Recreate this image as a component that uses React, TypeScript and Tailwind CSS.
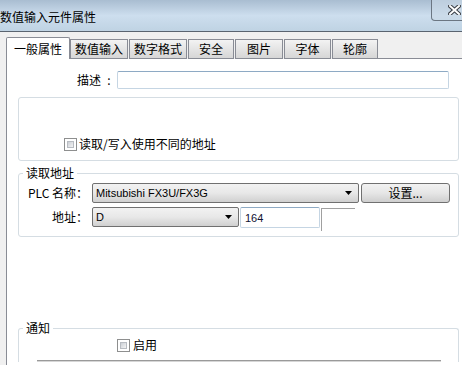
import React from 'react'

const font = { fontFamily: '"Noto Sans CJK SC", "Noto Sans", sans-serif' }

const tabs = ['数值输入', '数字格式', '安全', '图片', '字体', '轮廓']
const tabWidths = ['w-[58px]', 'w-[58px]', 'w-[46px]', 'w-[48px]', 'w-[47px]', 'w-[46px]']

function Checkbox() {
  return (
    <div className="w-[13px] h-[13px] border border-[#8e8f8f] bg-white p-[2px] shrink-0">
      <div className="w-full h-full bg-gradient-to-br from-[#cbcfd5] to-[#f4f4f4] border border-[#b8bcc2]" />
    </div>
  )
}

function Arrow() {
  return (
    <svg width="7" height="4" viewBox="0 0 7 4" className="shrink-0">
      <polygon points="0,0 7,0 3.5,4" fill="#000" />
    </svg>
  )
}

function Combo({ value, width }: { value: string; width: string }) {
  return (
    <div
      className={`${width} h-[20px] border border-[#707070] rounded-[2px] flex items-center pl-[3px] pr-[6px] bg-gradient-to-b from-[#f2f2f2] via-[#e8e8e8] to-[#d0d0d0]`}
    >
      <span className="flex-1 text-[11px] leading-none text-black" style={{ fontFamily: '"Liberation Sans", Arial, sans-serif' }}>
        {value}
      </span>
      <Arrow />
    </div>
  )
}

export default function App() {
  return (
    <div className="w-[462px] h-[365px] overflow-hidden bg-[#f0f0f0] flex flex-col text-[12px] leading-[14px] text-black" style={font}>
      {/* title bar */}
      <div className="h-[32px] shrink-0 border-b border-[#5a6470] bg-gradient-to-b from-[#a9bdd1] via-[#cddeee] to-[#bfd3e3] flex items-start justify-between">
        <div className="pt-[10px] text-[12px] leading-[14px] text-black">数值输入元件属性</div>
        <div className="w-[44px] h-[21px] mr-[-13px] border border-t-0 border-[#6b7682] rounded-b-[4px] bg-[#c9d8e6]/60 flex items-center pl-[16px]">
          <svg width="13" height="10" viewBox="0 0 13 10">
            <path d="M2 1 L11 9 M11 1 L2 9" stroke="#3a3f46" strokeWidth="4" strokeLinecap="square" />
            <path d="M2 1 L11 9 M11 1 L2 9" stroke="#ffffff" strokeWidth="2" strokeLinecap="square" />
          </svg>
        </div>
      </div>

      {/* tabs */}
      <div className="mt-[5px] h-[22px] shrink-0 flex items-end pl-[6px]">
        <div className="w-[64px] h-[22px] border border-b-0 border-[#898c95] rounded-t-[2px] bg-white flex items-center justify-center">
          一般属性
        </div>
        {tabs.map((t, i) => (
          <div
            key={t}
            className={`${tabWidths[i]} ${i === 0 ? '' : 'ml-[1px]'} h-[20px] border border-[#898c95] bg-gradient-to-b from-[#f3f3f3] to-[#d6d6d6] flex items-center justify-center`}
          >
            {t}
          </div>
        ))}
        <div className="flex-1 h-px bg-[#898c95]" />
      </div>

      {/* panel */}
      <div className="flex-1 ml-[6px] w-[470px] border-l border-[#898c95] bg-white flex flex-col">
        <div className="mt-[12px] flex items-center pl-[70px]">
          <span>描述</span>
          <span className="w-[16px] text-center">:</span>
          <div className="w-[332px] h-[18px] border border-[#c5d5e3] border-t-[#8eaac4] rounded-[2px] bg-white" />
        </div>

        <div className="mt-[8px] ml-[11px] w-[441px] border border-[#d5dde3] rounded-[3px] pt-[39px] pb-[9px] pl-[45px] flex items-center gap-[2px]">
          <Checkbox />
          <span>读取/写入使用不同的地址</span>
        </div>

        <fieldset className="mt-[5px] ml-[11px] w-[441px] border border-[#d5dde3] rounded-[3px] pt-[3px] pb-[5px]">
          <legend className="ml-[4px] px-[3px]">读取地址</legend>
          <div className="flex items-center">
            <div className="w-[70px] text-right pr-[1px]">PLC 名称：</div>
            <div className="ml-[3px]">
              <Combo value="Mitsubishi FX3U/FX3G" width="w-[267px]" />
            </div>
            <div className="ml-[2px] w-[89px] h-[20px] border border-[#707070] rounded-[3px] bg-gradient-to-b from-[#f2f2f2] via-[#e6e6e6] to-[#cfcfcf] flex items-center justify-center">
              设置...
            </div>
          </div>
          <div className="mt-[4px] flex items-start">
            <div className="w-[70px] h-[20px] flex items-center justify-end pr-[1px]">地址：</div>
            <div className="ml-[3px]">
              <Combo value="D" width="w-[147px]" />
            </div>
            <div className="ml-[1px] w-[80px] h-[21px] border border-[#c5d5e3] border-t-[#8eaac4] rounded-[2px] flex items-center pl-[4px] text-[11px] text-[#111133]" style={{ fontFamily: '"Liberation Sans", Arial, sans-serif' }}>
              164
            </div>
            <div className="ml-[1px] mt-[1px] w-[34px] h-[23px] border-t border-l border-[#a0a0a0]" />
          </div>
        </fieldset>

        <fieldset className="mt-[84px] ml-[11px] w-[441px] border border-b-0 border-[#d5dde3] rounded-t-[3px] pt-[3px]">
          <legend className="ml-[4px] px-[3px]">通知</legend>
          <div className="flex items-center gap-[3px] pl-[98px]">
            <Checkbox />
            <span>启用</span>
          </div>
          <div className="mt-[8px] ml-[18px] w-[404px] h-[2px] border-t border-[#9a9a9a] border-b-[#d6d6d6] border-b" />
        </fieldset>
      </div>
    </div>
  )
}
